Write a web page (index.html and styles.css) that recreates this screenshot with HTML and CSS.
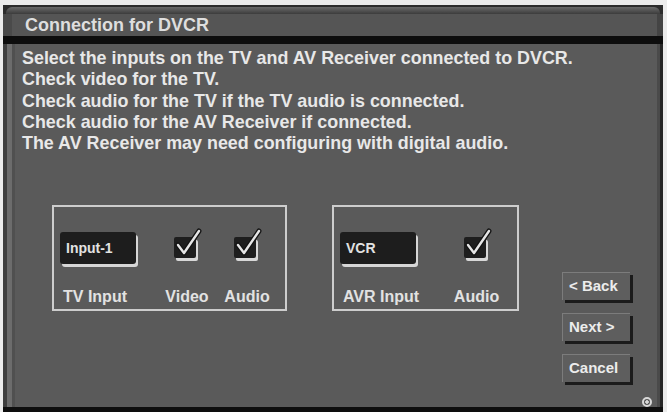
FILE: index.html
```html
<!DOCTYPE html>
<html>
<head>
<meta charset="utf-8">
<link rel="stylesheet" href="styles.css">
</head>
<body>
<div class="screen">
  <div class="window">
    <div class="titlebar">
      <div class="title-top"></div>
      <div class="title-face"><h1 class="title">Connection for DVCR</h1></div>
      <div class="title-bottom"></div>
    </div>
    <div class="content">
      <div class="instructions">
        <p>Select the inputs on the TV and AV Receiver connected to DVCR.</p>
        <p>Check video for the TV.</p>
        <p>Check audio for the TV if the TV audio is connected.</p>
        <p>Check audio for the AV Receiver if connected.</p>
        <p>The AV Receiver may need configuring with digital audio.</p>
      </div>
      <div class="lower">
        <div class="group group-tv">
          <div class="item item-field item-tv">
            <div class="field">Input-1</div>
            <span class="label">TV Input</span>
          </div>
          <div class="item item-video">
            <span class="checkbox"><svg class="tick" width="30" height="30" viewBox="0 0 30 30"><polyline points="4,12 10,20 25,-2" fill="none" stroke="#141414" stroke-width="5" stroke-linecap="round" stroke-linejoin="round"/><polyline points="4,12 10,20 25,-2" fill="none" stroke="#e6e6e6" stroke-width="2.4" stroke-linecap="round" stroke-linejoin="round"/></svg></span>
            <span class="label">Video</span>
          </div>
          <div class="item item-audio">
            <span class="checkbox"><svg class="tick" width="30" height="30" viewBox="0 0 30 30"><polyline points="4,12 10,20 25,-2" fill="none" stroke="#141414" stroke-width="5" stroke-linecap="round" stroke-linejoin="round"/><polyline points="4,12 10,20 25,-2" fill="none" stroke="#e6e6e6" stroke-width="2.4" stroke-linecap="round" stroke-linejoin="round"/></svg></span>
            <span class="label">Audio</span>
          </div>
        </div>
        <div class="group group-avr">
          <div class="item item-field item-avr">
            <div class="field">VCR</div>
            <span class="label">AVR Input</span>
          </div>
          <div class="item item-avr-audio">
            <span class="checkbox"><svg class="tick" width="30" height="30" viewBox="0 0 30 30"><polyline points="4,12 10,20 25,-2" fill="none" stroke="#141414" stroke-width="5" stroke-linecap="round" stroke-linejoin="round"/><polyline points="4,12 10,20 25,-2" fill="none" stroke="#e6e6e6" stroke-width="2.4" stroke-linecap="round" stroke-linejoin="round"/></svg></span>
            <span class="label">Audio</span>
          </div>
        </div>
        <div class="buttons">
          <div class="btn">&lt; Back</div>
          <div class="btn">Next &gt;</div>
          <div class="btn">Cancel</div>
        </div>
      </div>
    </div>
    <span class="corner-icon"></span>
  </div>
</div>
</body>
</html>
```

FILE: styles.css
```css
* { box-sizing: border-box; }
html, body { margin: 0; padding: 0; }
body {
  width: 667px;
  height: 412px;
  overflow: hidden;
  background: #ececec;
  font-family: "Liberation Sans", Arial, sans-serif;
  font-weight: bold;
  color: #e4e4e4;
}
.screen {
  height: 412px;
  padding: 5px 4px 0 3px;
}
.window {
  position: relative;
  height: 407px;
  display: flex;
  flex-direction: column;
  background: #5a5a5a;
  border-bottom: 5px solid #0e0e0e;
  box-shadow: inset 4px 0 0 #3e3e3e, inset 9px 0 0 #6c6c6c, inset 12px 0 0 #505050,
              inset -3px 0 0 #262626, inset -6px 0 0 #4a4a4a;
}
.titlebar {
  background: #2c2c2c;
  padding-top: 2px;
}
.title-top {
  height: 7px;
  margin: 0 3px;
  border-radius: 6px 6px 0 0;
  background: linear-gradient(#6a6a6a, #3c3c3c);
}
.title-face {
  height: 22px;
  background: #555;
  box-shadow: inset 9px 0 0 #4a4a4a, inset -6px 0 0 #444;
  display: flex;
  align-items: center;
  padding-left: 22px;
}
.title {
  margin: 0;
  font-size: 18px;
  line-height: 22px;
  font-weight: bold;
  color: #dedede;
}
.title-bottom {
  height: 8px;
  background: #0d0d0d;
}
.content {
  flex: 1;
  padding: 4px 0 0 19px;
}
.instructions p {
  margin: 0;
  font-size: 17.9px;
  line-height: 21.3px;
  color: #e8e8e8;
  white-space: nowrap;
}
.lower {
  display: flex;
  align-items: flex-start;
  margin-top: 51px;
  padding-left: 30px;
}
.group {
  border: 2px solid #cdcdcd;
  height: 106px;
  padding: 25px 0 0 6px;
  display: flex;
  align-items: flex-start;
}
.group-tv { width: 235px; }
.group-avr { width: 187px; margin-left: 45px; }
.item {
  height: 74px;
  display: flex;
  flex-direction: column;
  align-items: center;
  justify-content: space-between;
}
.item-field { align-items: flex-start; }
.item-tv { width: 78px; }
.item-video { width: 44px; margin-left: 27px; }
.item-audio { width: 46px; margin-left: 15px; }
.item-avr { width: 80px; }
.item-avr-audio { width: 47px; margin-left: 33px; }
.checkbox {
  position: relative;
  display: block;
  width: 22px;
  height: 21px;
  margin-top: 5px;
  margin-right: 4px;
  border-radius: 2px;
  background: #1e1e1e;
  box-shadow: 2px 3px 0 #d8d8d8;
}
.tick {
  position: absolute;
  left: 0;
  top: -4px;
  overflow: visible;
}
.field {
  width: 76px;
  height: 32px;
  border-radius: 3px;
  background: #1d1d1d;
  box-shadow: 2px 3px 0 #d6d6d6;
  font-size: 14px;
  line-height: 32px;
  padding-left: 6px;
  color: #e2e2e2;
}
.label {
  font-size: 16px;
  line-height: 18px;
  white-space: nowrap;
  color: #e2e2e2;
}
.item-field .label { padding-left: 3px; }
.buttons {
  display: flex;
  flex-direction: column;
  gap: 13px;
  margin-left: 43px;
  margin-top: 67px;
}
.btn {
  width: 68px;
  height: 28px;
  background: #5e5e5e;
  border-top: 1px solid #7c7c7c;
  border-left: 1px solid #7c7c7c;
  box-shadow: 3px 3px 0 #1b1b1b;
  font-size: 15px;
  line-height: 26px;
  padding-left: 6px;
  color: #ececec;
}
.corner-icon {
  position: absolute;
  right: 11px;
  bottom: 0;
  width: 10px;
  height: 10px;
  border-radius: 50%;
  border: 2px solid #d8d8d8;
  background: radial-gradient(circle, #d8d8d8 0 1.5px, #555 2px);
}
```
